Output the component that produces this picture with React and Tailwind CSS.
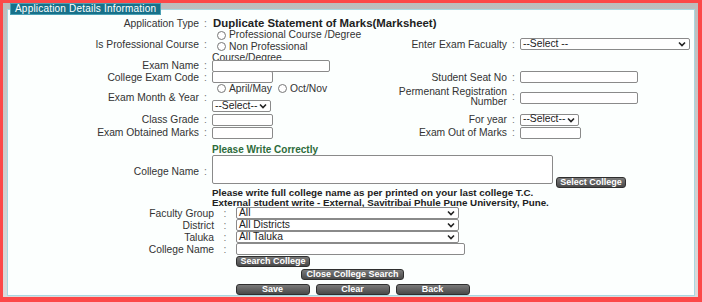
import React from 'react';

const font = { fontFamily: '"Liberation Sans", Arial, sans-serif' };

function Radio({ label }) {
  return (
    <span className="inline-flex items-center gap-[3px] whitespace-nowrap">
      <span className="inline-block w-[9px] h-[9px] rounded-full border border-[#777] bg-white" />
      <span>{label}</span>
    </span>
  );
}

function TextBox({ w }) {
  return <div className={`h-[12px] border border-[#8a8a8a] rounded-[2px] bg-white shrink-0 ${w}`} />;
}

function Select({ w, value }) {
  return (
    <div className={`h-[12px] border border-[#8a8a8a] rounded-[2px] bg-white flex items-center justify-between pl-[2px] pr-[3px] shrink-0 ${w}`}>
      <span className="leading-none text-[#222]">{value}</span>
      <svg width="8" height="6" viewBox="0 0 8 6" className="shrink-0">
        <path d="M1 1.5 L4 4.5 L7 1.5" fill="none" stroke="#222" strokeWidth="1.6" />
      </svg>
    </div>
  );
}

function Btn({ children, w = '', extra = '' }) {
  return (
    <div className={`h-[11px] rounded-[3px] border border-[#2f2f2f] bg-gradient-to-b from-[#7a7a7a] to-[#4a4a4a] text-white font-bold text-[9px] leading-none whitespace-nowrap flex items-center justify-center shrink-0 ${w} ${extra}`}>
      {children}
    </div>
  );
}

function Label({ children, w = 'w-[191px]', extra = '' }) {
  return <div className={`${w} text-right shrink-0 whitespace-nowrap ${extra}`}>{children}</div>;
}

function Colon({ w = 'w-[13px]', extra = '' }) {
  return <div className={`${w} text-center shrink-0 text-[#777] ${extra}`}>:</div>;
}

export default function App() {
  return (
    <div style={font} className="w-[702px] h-[302px] bg-[#fc4848] pt-[3px] pl-[3px] pr-[4px] pb-[5px] text-[10.3px] text-[#333]">
      <div className="relative w-full h-full bg-gradient-to-b from-[#bdbdbd] to-[#dcdcdc] pt-[6px] pl-[4px] pr-[3px] pb-[1px]">
        <div className="absolute left-[7px] top-0 h-[12px] bg-[#17718a] border border-[#4aa0b4] text-white text-[10px] tracking-[0.2px] leading-[10px] px-[4px] whitespace-nowrap z-10">
          Application Details Information
        </div>
        <div className="w-full h-full bg-[#fcfffe] border border-[#a9d8e2] pt-[7px] leading-[11px]">
          {/* Application type */}
          <div className="flex items-center h-[12px]">
            <Label>Application Type</Label>
            <Colon />
            <div className="font-bold text-[11.4px] text-[#222] pl-[1px] whitespace-nowrap">Duplicate Statement of Marks(Marksheet)</div>
          </div>

          {/* Professional course / faculty */}
          <div className="flex h-[31px]">
            <Label extra="pt-[10px]">Is Professional Course</Label>
            <Colon extra="pt-[10px]" />
            <div className="w-[160px] shrink-0 pt-[1px] leading-[10px]">
              <div className="pl-[5px]"><Radio label="Professional Course /Degree" /></div>
              <div className="pl-[5px]"><Radio label="Non Professional" /></div>
              <div className="leading-[9px]">Course/Degree</div>
            </div>
            <Label w="w-[135px]" extra="pt-[10px]">Enter Exam Facualty</Label>
            <Colon extra="pt-[10px]" />
            <div className="pt-[9px]"><Select w="w-[170px]" value="--Select --" /></div>
          </div>

          {/* Exam name */}
          <div className="flex items-center h-[11px]">
            <Label>Exam Name</Label>
            <Colon />
            <TextBox w="w-[118px]" />
          </div>

          {/* Code / seat */}
          <div className="flex items-center h-[12px]">
            <Label>College Exam Code</Label>
            <Colon />
            <div className="w-[160px] shrink-0"><TextBox w="w-[61px]" /></div>
            <Label w="w-[135px]">Student Seat No</Label>
            <Colon />
            <TextBox w="w-[118px]" />
          </div>

          {/* Month & year */}
          <div className="flex h-[30px]">
            <Label extra="pt-[9px]">Exam Month &amp; Year</Label>
            <Colon extra="pt-[9px]" />
            <div className="w-[160px] shrink-0">
              <div className="pl-[5px] flex gap-[6px]"><Radio label="April/May" /><Radio label="Oct/Nov" /></div>
              <div className="mt-[6px]"><Select w="w-[59px]" value="--Select--" /></div>
            </div>
            <Label w="w-[135px]" extra="pt-[4px] leading-[10px]">Permenant Registration<br />Number</Label>
            <Colon extra="pt-[8px]" />
            <div className="pt-[9px]"><TextBox w="w-[118px]" /></div>
          </div>

          {/* Class grade / for year */}
          <div className="flex items-center h-[13px]">
            <Label>Class Grade</Label>
            <Colon />
            <div className="w-[160px] shrink-0"><TextBox w="w-[61px]" /></div>
            <Label w="w-[135px]">For year</Label>
            <Colon />
            <Select w="w-[59px]" value="--Select--" />
          </div>

          {/* Marks */}
          <div className="flex items-center h-[13px]">
            <Label>Exam Obtained Marks</Label>
            <Colon />
            <div className="w-[160px] shrink-0"><TextBox w="w-[61px]" /></div>
            <Label w="w-[135px]">Exam Out of Marks</Label>
            <Colon />
            <TextBox w="w-[61px]" />
          </div>

          {/* College name */}
          <div className="flex h-[45px] pt-[6px]">
            <Label extra="pt-[21px]">College Name</Label>
            <Colon extra="pt-[21px]" />
            <div>
              <div className="font-bold text-[10px] text-[#2d6b3a] leading-[10px] whitespace-nowrap">Please Write Correctly</div>
              <div className="flex items-end gap-[3px]">
                <div className="w-[341px] h-[29px] border border-[#8a8a8a] rounded-[2px] bg-white shrink-0" />
                <Btn w="w-[70px]" extra="-mb-[4px]">Select College</Btn>
              </div>
            </div>
          </div>

          <div className="pl-[204px] mt-[4px] font-bold text-[9.8px] text-[#222] leading-[9.5px] whitespace-nowrap">
            <div>Please write full college name as per printed on your last college T.C.</div>
            <div>External student write - External, Savitribai Phule Pune University, Pune.</div>
          </div>

          {/* College search */}
          <div>
            <div className="flex items-center h-[12px]">
              <Label w="w-[206px]">Faculty Group</Label>
              <Colon w="w-[22px]" />
              <Select w="w-[223px]" value="All" />
            </div>
            <div className="flex items-center h-[12px]">
              <Label w="w-[206px]">District</Label>
              <Colon w="w-[22px]" />
              <Select w="w-[223px]" value="All Districts" />
            </div>
            <div className="flex items-center h-[12px]">
              <Label w="w-[206px]">Taluka</Label>
              <Colon w="w-[22px]" />
              <Select w="w-[223px]" value="All Taluka" />
            </div>
            <div className="flex items-center h-[12px]">
              <Label w="w-[206px]">College Name</Label>
              <Colon w="w-[22px]" />
              <TextBox w="w-[229px]" />
            </div>
            <div className="flex h-[13px] items-center pl-[228px]">
              <Btn w="w-[74px]">Search College</Btn>
            </div>
          </div>

          <div className="flex justify-center h-[13px] items-center pl-[3px]">
            <Btn w="w-[103px]">Close College Search</Btn>
          </div>
          <div className="flex justify-center gap-[6px] h-[17px] items-center pl-[3px]">
            <Btn w="w-[74px]">Save</Btn>
            <Btn w="w-[74px]">Clear</Btn>
            <Btn w="w-[74px]">Back</Btn>
          </div>
        </div>
      </div>
    </div>
  );
}
